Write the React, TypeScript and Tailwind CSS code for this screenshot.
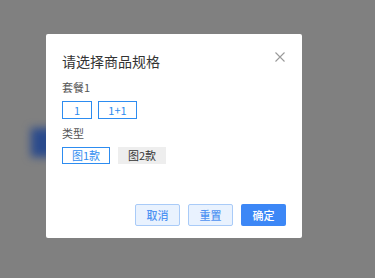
import React from "react";

export default function App() {
  const font = { fontFamily: '"Noto Sans CJK SC", "Noto Sans", sans-serif' };
  return (
    <div className="relative w-[375px] h-[278px] overflow-hidden bg-[#808080]" style={font}>
      <div className="absolute left-[31px] top-[128px] w-[40px] h-[29px] bg-[#2a4a8c] blur-[4px]" />
      <div className="absolute left-[46px] top-[34px] w-[256px] h-[204px] bg-white rounded-[2px] flex flex-col px-[16px]">
        <div className="pt-[16px] text-[14px] leading-[22px] text-[#333333]">请选择商品规格</div>
        <svg
          className="absolute right-[17px] top-[18px]"
          width="10"
          height="10"
          viewBox="0 0 10 10"
          fill="none"
          stroke="#9a9a9a"
          strokeWidth="1.1"
        >
          <path d="M0.5 0.5 L9.5 9.5 M9.5 0.5 L0.5 9.5" />
        </svg>
        <div className="mt-[7px] text-[11px] leading-[16px] text-[#555555]">套餐1</div>
        <div className="mt-[6px] flex gap-[6px]">
          <div className="w-[30px] h-[18px] border border-[#2d8cf0] text-[#2d8cf0] text-[11px] flex items-center justify-center">1</div>
          <div className="w-[39px] h-[18px] border border-[#2d8cf0] text-[#2d8cf0] text-[11px] flex items-center justify-center">1+1</div>
        </div>
        <div className="mt-[6px] text-[11px] leading-[16px] text-[#555555]">类型</div>
        <div className="mt-[6px] flex gap-[8px]">
          <div className="w-[48px] h-[17px] border border-[#2d8cf0] text-[#2d8cf0] text-[11px] flex items-center justify-center">图1款</div>
          <div className="w-[48px] h-[17px] border border-[#eeeeee] bg-[#eeeeee] text-[#333333] text-[11px] flex items-center justify-center">图2款</div>
        </div>
        <div className="mt-auto pb-[12px] flex justify-end gap-[8px]">
          <div className="w-[45px] h-[22px] rounded-[2px] border border-[#a9cbf8] bg-[#e9f2fe] text-[#4f93f2] text-[11px] font-medium flex items-center justify-center">取消</div>
          <div className="w-[45px] h-[22px] rounded-[2px] border border-[#a9cbf8] bg-[#e9f2fe] text-[#4f93f2] text-[11px] font-medium flex items-center justify-center">重置</div>
          <div className="w-[45px] h-[22px] rounded-[2px] bg-[#3c87f6] text-white text-[11px] font-medium flex items-center justify-center">确定</div>
        </div>
      </div>
    </div>
  );
}
